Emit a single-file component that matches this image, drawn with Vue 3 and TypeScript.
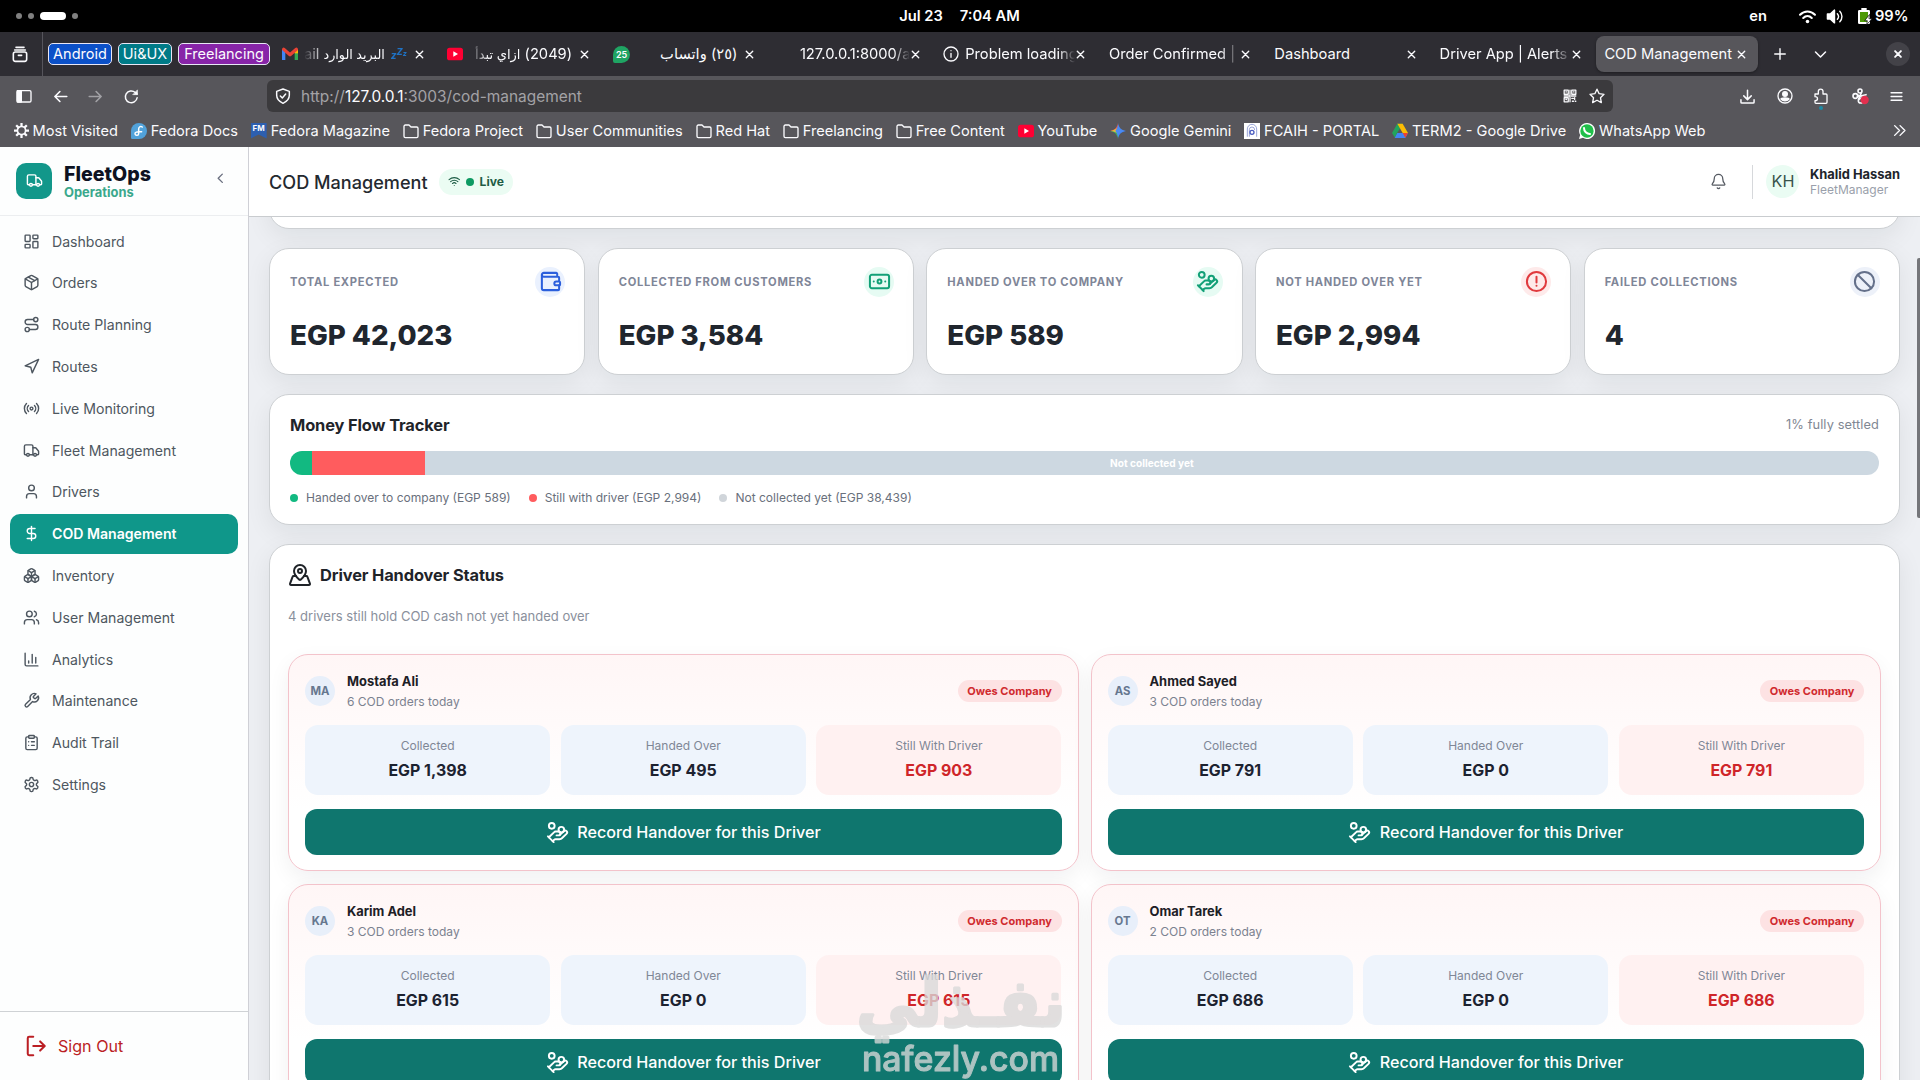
<script setup lang="ts">
import { h, type FunctionalComponent } from 'vue'

const glyphs: Record<string, string> = {
  dashboard: '<rect x="3" y="3" width="7" height="9" rx="1"/><rect x="14" y="3" width="7" height="5" rx="1"/><rect x="14" y="12" width="7" height="9" rx="1"/><rect x="3" y="16" width="7" height="5" rx="1"/>',
  package: '<path d="M11 21.73a2 2 0 0 0 2 0l7-4A2 2 0 0 0 21 16V8a2 2 0 0 0-1-1.73l-7-4a2 2 0 0 0-2 0l-7 4A2 2 0 0 0 3 8v8a2 2 0 0 0 1 1.73z"/><path d="M12 22V12"/><path d="M3.29 7 12 12l8.71-5"/><path d="m7.5 4.27 9 5.15"/>',
  route: '<circle cx="6" cy="19" r="3"/><path d="M9 19h8.5a3.5 3.5 0 0 0 0-7h-11a3.5 3.5 0 0 1 0-7H15"/><circle cx="18" cy="5" r="3"/>',
  navigation: '<path d="M3 11 22 2l-9 19-2-8z"/>',
  radio: '<path d="M4.9 19.1C1 15.2 1 8.8 4.9 4.9"/><path d="M7.8 16.2c-2.3-2.3-2.3-6.1 0-8.5"/><circle cx="12" cy="12" r="2"/><path d="M16.2 7.8c2.3 2.3 2.3 6.1 0 8.5"/><path d="M19.1 4.9C23 8.8 23 15.1 19.1 19"/>',
  truck: '<path d="M14 18V6a2 2 0 0 0-2-2H4a2 2 0 0 0-2 2v11a1 1 0 0 0 1 1h2"/><path d="M15 18H9"/><path d="M19 18h2a1 1 0 0 0 1-1v-3.65a1 1 0 0 0-.22-.624l-3.48-4.35A1 1 0 0 0 17.52 8H14"/><circle cx="17" cy="18" r="2"/><circle cx="7" cy="18" r="2"/>',
  user: '<path d="M19 21v-2a4 4 0 0 0-4-4H9a4 4 0 0 0-4 4v2"/><circle cx="12" cy="7" r="4"/>',
  dollar: '<path d="M12 2v20"/><path d="M17 5H9.5a3.5 3.5 0 0 0 0 7h5a3.5 3.5 0 0 1 0 7H6"/>',
  boxes: '<path d="M2.97 12.92A2 2 0 0 0 2 14.63v3.24a2 2 0 0 0 .97 1.71l3 1.8a2 2 0 0 0 2.06 0L12 19v-5.5l-5-3-4.03 2.42Z"/><path d="m7 16.5-4.74-2.85"/><path d="m7 16.5 5-3"/><path d="M7 16.5v5.17"/><path d="M12 13.5V19l3.97 2.38a2 2 0 0 0 2.06 0l3-1.8a2 2 0 0 0 .97-1.71v-3.24a2 2 0 0 0-.97-1.71L17 10.5l-5 3Z"/><path d="m17 16.5-5-3"/><path d="m17 16.5 4.74-2.85"/><path d="M17 16.5v5.17"/><path d="M7.97 4.42A2 2 0 0 0 7 6.13v4.37l5 3 5-3V6.13a2 2 0 0 0-.97-1.71l-3-1.8a2 2 0 0 0-2.06 0l-3 1.8Z"/><path d="M12 8 7.26 5.15"/><path d="m12 8 4.74-2.85"/><path d="M12 13.5V8"/>',
  users: '<path d="M16 21v-2a4 4 0 0 0-4-4H6a4 4 0 0 0-4 4v2"/><circle cx="9" cy="7" r="4"/><path d="M22 21v-2a4 4 0 0 0-3-3.87"/><path d="M16 3.13a4 4 0 0 1 0 7.75"/>',
  chart: '<path d="M3 3v16a2 2 0 0 0 2 2h16"/><path d="M18 17V9"/><path d="M13 17V5"/><path d="M8 17v-3"/>',
  wrench: '<path d="M14.7 6.3a1 1 0 0 0 0 1.4l1.6 1.6a1 1 0 0 0 1.4 0l3.77-3.77a6 6 0 0 1-7.94 7.94l-6.91 6.91a2.12 2.12 0 0 1-3-3l6.91-6.91a6 6 0 0 1 7.94-7.94l-3.76 3.76z"/>',
  clipboard: '<rect x="8" y="2" width="8" height="4" rx="1"/><path d="M16 4h2a2 2 0 0 1 2 2v14a2 2 0 0 1-2 2H6a2 2 0 0 1-2-2V6a2 2 0 0 1 2-2h2"/><path d="M12 11h4"/><path d="M12 16h4"/><path d="M8 11h.01"/><path d="M8 16h.01"/>',
  settings: '<path d="M12.22 2h-.44a2 2 0 0 0-2 2v.18a2 2 0 0 1-1 1.73l-.43.25a2 2 0 0 1-2 0l-.15-.08a2 2 0 0 0-2.73.73l-.22.38a2 2 0 0 0 .73 2.73l.15.1a2 2 0 0 1 1 1.72v.51a2 2 0 0 1-1 1.74l-.15.09a2 2 0 0 0-.73 2.73l.22.38a2 2 0 0 0 2.73.73l.15-.08a2 2 0 0 1 2 0l.43.25a2 2 0 0 1 1 1.73V20a2 2 0 0 0 2 2h.44a2 2 0 0 0 2-2v-.18a2 2 0 0 1 1-1.73l.43-.25a2 2 0 0 1 2 0l.15.08a2 2 0 0 0 2.73-.73l.22-.39a2 2 0 0 0-.73-2.73l-.15-.08a2 2 0 0 1-1-1.74v-.5a2 2 0 0 1 1-1.74l.15-.09a2 2 0 0 0 .73-2.73l-.22-.38a2 2 0 0 0-2.73-.73l-.15.08a2 2 0 0 1-2 0l-.43-.25a2 2 0 0 1-1-1.73V4a2 2 0 0 0-2-2z"/><circle cx="12" cy="12" r="3"/>',
  logout: '<path d="M9 22H4.500a1.500 1.500 0 0 1-1.500-1.500v-17A1.500 1.500 0 0 1 4.500 2H9"/><path d="m16.500 17 5-5-5-5"/><path d="M21 12H9"/>',
  wallet: '<path d="M19 7V4a1 1 0 0 0-1-1H5a2 2 0 0 0 0 4h15a1 1 0 0 1 1 1v4h-3a2 2 0 0 0 0 4h3a1 1 0 0 0 1-1v-2a1 1 0 0 0-1-1"/><path d="M3 5v14a2 2 0 0 0 2 2h15a1 1 0 0 0 1-1v-4"/>',
  banknote: '<rect x="2" y="5" width="20" height="14" rx="2"/><circle cx="12" cy="12" r="2"/><path d="M6 12h.01M18 12h.01"/>',
  handcoins: '<path d="M11 15h2a2 2 0 1 0 0-4h-3c-.6 0-1.1.2-1.4.6L3 17"/><path d="m7 21 1.6-1.4c.3-.4.8-.6 1.4-.6h4c1.1 0 2.1-.4 2.8-1.2l4.6-4.4a2 2 0 0 0-2.75-2.91l-4.2 3.9"/><path d="m2 16 6 6"/><circle cx="16" cy="9" r="2.9"/><circle cx="6" cy="5" r="3"/>',
  alert: '<circle cx="12" cy="12" r="10"/><path d="M12 7v6"/><path d="M12 16.500h.01"/>',
  ban: '<circle cx="12" cy="12" r="10"/><path d="m4.900 4.900 14.200 14.200"/>',
  mappin: '<path d="M18 8c0 3.613-3.869 7.429-5.393 8.795a1 1 0 0 1-1.214 0C9.870 15.429 6 11.613 6 8a6 6 0 0 1 12 0"/><circle cx="12" cy="8" r="2"/><path d="M8 13H5.600a1 1 0 0 0-.948.683l-2.600 7A1 1 0 0 0 3 22h18a1 1 0 0 0 .948-1.316l-2.600-7A1 1 0 0 0 18.400 13H16"/>',
  bell: '<path d="M10.268 21a2 2 0 0 0 3.464 0"/><path d="M3.262 15.326A1 1 0 0 0 4 17h16a1 1 0 0 0 .740-1.673C19.410 13.956 18 12.499 18 8A6 6 0 0 0 6 8c0 4.499-1.411 5.956-2.738 7.326"/>',
  wifi: '<path d="M12 20h.01"/><path d="M2 8.820a15 15 0 0 1 20 0"/><path d="M5 12.859a10 10 0 0 1 14 0"/><path d="M8.500 16.429a5 5 0 0 1 7 0"/>',
  left: '<path d="m15 18-6-6 6-6"/>',
  down: '<path d="m4 8 8 8 8-8"/>',
  close: '<path d="M5 5l14 14M19 5 5 19"/>',
  plus: '<path d="M12 3v18M3 12h18"/>',
  archive: '<path d="M6 2h12"/><path d="M4 6h16"/><rect x="2" y="9" width="20" height="14" rx="3"/><path d="M9.500 14h5"/>',
  panel: '<rect x="1.500" y="4" width="21" height="17" rx="2"/><path d="M2 4h6v17H2z" fill="currentColor"/>',
  back: '<path d="M22 12H3M11 4l-8 8 8 8"/>',
  forward: '<path d="M2 12h19M13 4l8 8-8 8"/>',
  reload: '<path d="M21 14a9.500 9.500 0 1 1-3-8.500L21 8"/><path d="M21.500 2v7h-7z" fill="currentColor" stroke-width="1"/>',
  shield: '<path d="M12 1.500 21.500 5v6c0 6-4 9.500-9.500 12-5.500-2.500-9.500-6-9.500-12V5z"/><path d="m8 12 3 3 5-6"/>',
  star: '<path d="m12 1.800 3.200 6.700 7.300 1-5.300 5.100 1.300 7.300-6.500-3.500-6.500 3.500 1.300-7.300L1.500 9.500l7.300-1z"/>',
  download: '<path d="M12 2v14M6 11l6 6 6-6M1.500 17v4a1.500 1.500 0 0 0 1.500 1.500h18a1.500 1.500 0 0 0 1.500-1.500v-4"/>',
  account: '<circle cx="12" cy="12" r="10.500"/><circle cx="12" cy="9" r="3.500" fill="currentColor"/><path d="M6 16.500c0-2 12-2 12 0-3 3.500-9 3.500-12 0z" fill="currentColor"/>',
  puzzle: '<path d="M3 9h5V5c0-4.500 7-4.500 7 0v4h4.500A1.500 1.500 0 0 1 21 10.500v11a1.500 1.500 0 0 1-1.500 1.500h-15A1.500 1.500 0 0 1 3 21.500V19c5 0 5-6 0-6z"/>',
  clip: '<circle cx="12" cy="4.500" r="3"/><circle cx="5" cy="12" r="3.500"/><circle cx="13" cy="19" r="3.500"/><path d="m14 7-4 10M8 13l13-3M9 11l9 4"/><circle cx="19" cy="18" r="5" fill="#e3304f" stroke="#e3304f"/>',
  menu: '<path d="M2 5h20M2 12h20M2 19h20"/>',
  more: '<path d="m3 3 9 9-9 9M13 3l9 9-9 9"/>',
  info: '<circle cx="12" cy="12" r="10.500"/><path d="M12 11v6M12 7h.01"/>',
  folder: '<path d="M1.500 20V5a2 2 0 0 1 2-2h5.500l3 3h8.500a2 2 0 0 1 2 2v12a2 2 0 0 1-2 2h-17a2 2 0 0 1-2-2z"/>',
  gear: '<circle cx="12" cy="12" r="6.500" stroke-width="2.600"/><path stroke-width="3.600" stroke-linecap="butt" d="M12 0v5M12 19v5M0 12h5M19 12h5M3.500 3.500l3.500 3.500M17 17l3.500 3.500M20.500 3.500l-3.500 3.500M7 17l-3.500 3.500"/>',
  qr: '<path d="M2 2h7v7H2zM15 2h7v7h-7zM2 15h7v7H2zM5 5h1M18 5h1M5 18h1M12 2v8M2 12h10M14 12h8M12 14v8M15 16h3M20 15v3M16 21h2M21 21h1"/>',
  youtube: '<rect x="0" y="2.500" width="24" height="19" rx="4" fill="#ff0033" stroke="none"/><path d="M9.500 8v8l7-4z" fill="#fff" stroke="none"/>',
  gmail: '<path d="M2.500 21V5" stroke="#4285f4" stroke-width="5" stroke-linecap="butt"/><path d="M21.500 21V5" stroke="#34a853" stroke-width="5" stroke-linecap="butt"/><path d="M21.500 11V5" stroke="#fbbc04" stroke-width="5" stroke-linecap="butt"/><path d="m2.500 5 9.500 8 9.500-8" stroke="#ea4335" stroke-width="5"/>',
  fedora: '<path d="M12 0a12 12 0 1 1 0 24H2a2 2 0 0 1-2-2V12A12 12 0 0 1 12 0z" fill="#51a2da" stroke="none"/><path d="M17 6c-3-2-5.500 0-5.500 3v7c0 3-5 3.500-5.500.500s4-3.500 5.500-3.500h4.500" stroke="#fff" stroke-width="2.200"/>',
  gemini: '<path d="M12 0c1.200 7 4.800 10.800 12 12H12z" fill="#4a8af4" stroke="none"/><path d="M12 0c-1.200 7-4.800 10.800-12 12h12z" fill="#e8584f" stroke="none"/><path d="M0 12c7.200 1.200 10.800 5 12 12V12z" fill="#3fae5f" stroke="none"/><path d="M12 24c1.200-7 4.800-10.800 12-12H12z" fill="#4285f4" stroke="none"/><path d="M1 12c4-.8 7-2.500 9-5v8c-2-1.500-5-2.500-9-3z" fill="#e8b83a" stroke="none"/><path d="M12 3c1 5 4 8 9 9-5 1-8 4-9 9-1-4-2-7-4-9 2-2 3-5 4-9z" fill="#4a8af4" stroke="none"/>',
  portal: '<rect width="24" height="24" fill="#fff" stroke="none"/><path d="M5 20V9a7 7 0 0 1 14 0v11M8 20V10a4 4 0 0 1 8 0" stroke="#9aa5d8" stroke-width="1.500"/><circle cx="12" cy="14" r="3" stroke="#4a5cc0"/>',
  drive: '<path d="M8 1h8L8.500 14 4.500 22 0 15z" fill="#22a45d" stroke="none"/><path d="M8 1h8l8 14h-8z" fill="#fbbc04" stroke="none"/><path d="M8 15h16l-4 7.500H4z" fill="#4285f4" stroke="none"/><path d="M16 15h8l-4 7z" fill="#ea4335" stroke="none"/>',
  whatsapp: '<path d="M12 0a12 12 0 1 1-6 22.300L0 24l1.700-6A12 12 0 0 1 12 0z" fill="#fff" stroke="none"/><circle cx="12" cy="12" r="10" fill="#1fbf4a" stroke="none"/><path d="M7.500 7.500c0 5 4 9 9 9" stroke="#fff" stroke-width="3"/>',
  volume: '<path d="M2 8.500h4L12 3v18l-6-5.500H2z" fill="currentColor"/><path d="M16 8c2 2.300 2 5.700 0 8M19.500 4.500c4 4.300 4 10.700 0 15"/>',
  syswifi: '<path d="M1.500 9.500c6-6 15-6 21 0" stroke-width="3"/><path d="M6 14c3.500-3.300 8.500-3.300 12 0" stroke-width="3"/><circle cx="12" cy="19" r="2.500" fill="currentColor" stroke="none"/>',
  battery: '<path d="M8 0h8v3h3a2 2 0 0 1 2 2v17a2 2 0 0 1-2 2H5a2 2 0 0 1-2-2V5a2 2 0 0 1 2-2h3z" fill="#fff" stroke="none"/><rect x="6" y="6" width="12" height="15" fill="#4e9a06" stroke="none"/><path d="m20 10-7 9h4l-1 6 8-9h-4z" fill="#fff" stroke="#000" stroke-width="1"/>',
}

interface IconProps { name: string; size?: number; stroke?: number }
const Icon: FunctionalComponent<IconProps> = (p) =>
  h('svg', {
    width: p.size ?? 16,
    height: p.size ?? 16,
    viewBox: '0 0 24 24',
    fill: 'none',
    stroke: 'currentColor',
    'stroke-width': p.stroke ?? 2,
    'stroke-linecap': 'round',
    'stroke-linejoin': 'round',
    style: 'display:block;flex:none;overflow:visible',
    innerHTML: glyphs[p.name],
  })
Icon.props = ['name', 'size', 'stroke']

interface Tab { title: string; lead?: string; tail?: string; icon?: string; rtl?: boolean; active?: boolean; fade?: boolean; kind?: string }
const tabs: Tab[] = [
  { title: 'البريد الوارد', tail: ' ail', icon: 'gmail', rtl: true, fade: true, kind: 'mail' },
  { lead: '(2049) ', title: 'ازاي تبدأ', icon: 'youtube', rtl: true, fade: true, kind: 'video' },
  { title: '(٢٥) واتساب', rtl: true, kind: 'chat' },
  { title: '127.0.0.1:8000/a', fade: true, kind: 'blank' },
  { title: 'Problem loading', icon: 'info', fade: true },
  { title: 'Order Confirmed |', fade: true },
  { title: 'Dashboard' },
  { title: 'Driver App | Alerts', fade: true },
  { title: 'COD Management', active: true },
]

const bookmarks = [
  ['gear', 'Most Visited'], ['fedora', 'Fedora Docs'], ['fm', 'Fedora Magazine'], ['folder', 'Fedora Project'],
  ['folder', 'User Communities'], ['folder', 'Red Hat'], ['folder', 'Freelancing'], ['folder', 'Free Content'],
  ['youtube', 'YouTube'], ['gemini', 'Google Gemini'], ['portal', 'FCAIH - PORTAL'],
  ['drive', 'TERM2 - Google Drive'], ['whatsapp', 'WhatsApp Web'],
]

const nav = [
  ['dashboard', 'Dashboard'], ['package', 'Orders'], ['route', 'Route Planning'], ['navigation', 'Routes'],
  ['radio', 'Live Monitoring'], ['truck', 'Fleet Management'], ['user', 'Drivers'], ['dollar', 'COD Management'],
  ['boxes', 'Inventory'], ['users', 'User Management'], ['chart', 'Analytics'], ['wrench', 'Maintenance'],
  ['clipboard', 'Audit Trail'], ['settings', 'Settings'],
]

const stats = [
  { label: 'Total Expected', value: 'EGP 42,023', icon: 'wallet', tone: 'blue' },
  { label: 'Collected from customers', value: 'EGP 3,584', icon: 'banknote', tone: 'green' },
  { label: 'Handed over to company', value: 'EGP 589', icon: 'handcoins', tone: 'green' },
  { label: 'Not handed over yet', value: 'EGP 2,994', icon: 'alert', tone: 'red' },
  { label: 'Failed collections', value: '4', icon: 'ban', tone: 'slate' },
]

const legend = [
  { tone: 'settled', text: 'Handed over to company (EGP 589)' },
  { tone: 'held', text: 'Still with driver (EGP 2,994)' },
  { tone: 'open', text: 'Not collected yet (EGP 38,439)' },
]

const drivers = [
  { initials: 'MA', name: 'Mostafa Ali', orders: 6, collected: '1,398', handed: '495', held: '903' },
  { initials: 'AS', name: 'Ahmed Sayed', orders: 3, collected: '791', handed: '0', held: '791' },
  { initials: 'KA', name: 'Karim Adel', orders: 3, collected: '615', handed: '0', held: '615' },
  { initials: 'OT', name: 'Omar Tarek', orders: 2, collected: '686', handed: '0', held: '686' },
]
</script>

<template>
  <div class="screen">
    <div class="sysbar">
      <div class="spaces"><i /><i /><b /><i /></div>
      <div class="clock"><span>Jul 23</span><span>7:04 AM</span></div>
      <div class="tray">
        <span class="lang">en</span>
        <Icon name="syswifi" :size="17" /><Icon name="volume" :size="17" class="vol" />
        <Icon name="battery" :size="16" /><span class="pct">99%</span>
      </div>
    </div>

    <div class="tabbar">
      <div class="archive"><Icon name="archive" :size="16" :stroke="2.4" /></div>
      <div class="groups">
        <span class="group android">Android</span>
        <span class="group uiux">Ui&amp;UX</span>
        <span class="group free">Freelancing</span>
      </div>
      <div v-for="t in tabs" :key="t.title" class="tab" :class="{ active: t.active }">
        <Icon v-if="t.icon" :name="t.icon" :size="16" class="fav" />
        <span v-else-if="t.kind === 'chat'" class="fav chat">25</span>
        <span v-else-if="t.kind === 'blank'" class="fav blank" />
        <span class="title" :class="[{ fade: t.fade, rtl: t.rtl }, t.kind]" :dir="t.rtl ? 'rtl' : 'ltr'"><em v-if="t.kind === 'mail'" class="zzz" dir="ltr">z<sup>Z</sup><sub>z</sub></em>{{ t.lead }}<span class="words">{{ t.title }}</span>{{ t.tail }}</span>
        <Icon name="close" :size="11" :stroke="3" />
      </div>
      <div class="tabtools">
        <Icon name="plus" :size="14" :stroke="2.4" />
        <Icon name="down" :size="15" :stroke="2.4" />
        <span class="winclose"><Icon name="close" :size="10" :stroke="4.5" /></span>
      </div>
    </div>

    <div class="toolbar">
      <div class="navbtns">
        <Icon name="panel" :size="16" /><Icon name="back" :size="15" :stroke="2.6" />
        <Icon name="forward" :size="15" :stroke="2.6" class="dim" /><Icon name="reload" :size="15" :stroke="2.4" />
      </div>
      <div class="urlbar">
        <Icon name="shield" :size="16" :stroke="2.2" />
        <span class="url">http://<b>127.0.0.1</b>:3003/cod-management</span>
        <Icon name="qr" :size="14" :stroke="2.2" /><Icon name="star" :size="16" />
      </div>
      <div class="exts">
        <Icon name="download" :size="15" :stroke="2.4" /><Icon name="account" :size="16" />
        <span class="ext"><Icon name="puzzle" :size="16" /><i /></span>
        <Icon name="clip" :size="16" :stroke="2.4" /><Icon name="menu" :size="13" :stroke="2.6" />
      </div>
    </div>

    <div class="bookmarks">
      <div v-for="b in bookmarks" :key="b[1]" class="bm">
        <span v-if="b[0] === 'fm'" class="fm">FM</span>
        <Icon v-else :name="b[0]" :size="b[0] === 'gear' ? 15 : 16" />
        <span>{{ b[1] }}</span>
      </div>
      <Icon name="more" :size="13" :stroke="2.6" class="overflow" />
    </div>

    <div class="page">
      <aside class="sidebar">
        <div class="brand">
          <div class="logo"><Icon name="truck" :size="17" /></div>
          <div class="brandtext"><strong>FleetOps</strong><span>Operations</span></div>
          <Icon name="left" :size="16.500" class="collapse" />
        </div>
        <nav class="nav">
          <a v-for="n in nav" :key="n[1]" class="item" :class="{ on: n[0] === 'dollar' }">
            <Icon :name="n[0]" :size="17" :stroke="2" /><span>{{ n[1] }}</span>
          </a>
        </nav>
        <div class="signout"><Icon name="logout" :size="22" :stroke="2.2" /><span>Sign Out</span></div>
      </aside>

      <main class="main">
        <header class="header">
          <h1>COD Management</h1>
          <div class="live"><Icon name="wifi" :size="12.500" /><i /><span>Live</span></div>
          <div class="account">
            <Icon name="bell" :size="17" :stroke="1.800" class="bell" />
            <span class="sep" />
            <span class="kh">KH</span>
            <div class="who"><strong>Khalid Hassan</strong><span>FleetManager</span></div>
          </div>
        </header>

        <div class="content">
          <section class="card stub" />
          <div class="stats">
            <section v-for="s in stats" :key="s.label" class="card stat">
              <div class="stathead">
                <span>{{ s.label }}</span>
                <div class="staticon" :class="s.tone"><Icon :name="s.icon" :size="23" :stroke="2.1" /></div>
              </div>
              <strong>{{ s.value }}</strong>
            </section>
          </div>

          <section class="card flow">
            <div class="flowhead"><h2>Money Flow Tracker</h2><span>1% fully settled</span></div>
            <div class="bar">
              <div class="settled" style="width: 1.380%" />
              <div class="held" style="width: 7.100%" />
              <div class="open">Not collected yet</div>
            </div>
            <div class="legend">
              <span v-for="l in legend" :key="l.tone"><i :class="l.tone" />{{ l.text }}</span>
            </div>
          </section>

          <section class="card handover">
            <div class="hohead"><Icon name="mappin" :size="24" :stroke="2" /><h2>Driver Handover Status</h2></div>
            <p>4 drivers still hold COD cash not yet handed over</p>
            <div class="drivers">
              <article v-for="d in drivers" :key="d.initials" class="driver">
                <div class="dhead">
                  <span class="avatar">{{ d.initials }}</span>
                  <div class="dname"><strong>{{ d.name }}</strong><span>{{ d.orders }} COD orders today</span></div>
                  <span class="badge">Owes Company</span>
                </div>
                <div class="boxes">
                  <div><span>Collected</span><strong>EGP {{ d.collected }}</strong></div>
                  <div><span>Handed Over</span><strong>EGP {{ d.handed }}</strong></div>
                  <div class="owed"><span>Still With Driver</span><strong>EGP {{ d.held }}</strong></div>
                </div>
                <button><Icon name="handcoins" :size="23" :stroke="2" />Record Handover for this Driver</button>
              </article>
            </div>
          </section>
        </div>
        <span class="scrollthumb" />
      </main>
    </div>

    <svg class="watermark" width="220" height="110" viewBox="0 0 220 110">
      <text x="107" y="54" text-anchor="middle" textLength="209" lengthAdjust="spacingAndGlyphs" class="wm-ar">نفـذلي</text>
      <text x="8" y="99" textLength="197" lengthAdjust="spacingAndGlyphs" class="wm-en">nafezly.com</text>
    </svg>
  </div>
</template>

<style>
html, body { margin: 0; overflow: hidden; background: #edeff3; }
</style>

<style scoped>
* { box-sizing: border-box; }
.screen { position: relative; width: 1920px; height: 1080px; overflow: hidden; display: flex; flex-direction: column; font-family: Inter, "DejaVu Sans", sans-serif; color: #1f2328; white-space: nowrap; }
h1, h2, p { margin: 0; }

.sysbar { height: 32px; flex: none; background: #000; color: #fff; display: grid; grid-template-columns: 1fr auto 1fr; align-items: center; padding: 0 11.500px 0 15.500px; font-size: 14.700px; font-weight: 600; }
.spaces { display: flex; align-items: center; gap: 6.300px; }
.spaces i { width: 6px; height: 6px; border-radius: 50%; background: #808080; }
.spaces b { width: 26px; height: 8px; border-radius: 4px; background: #fff; }
.clock { display: flex; gap: 17px; margin-right: 5px; }
.tray { display: flex; align-items: center; justify-content: flex-end; }
.lang { margin-right: 32px; }
.vol { margin: 0 13px 0 10px; }
.pct { margin-left: 3px; }

.tabbar { height: 44px; flex: none; background: #2e2d33; color: #fbfbfe; display: flex; align-items: center; font-size: 14.700px; }
.archive { width: 43px; height: 44px; border-right: 1px solid #56555c; display: flex; align-items: center; padding-left: 12px; }
.groups { display: flex; gap: 6px; width: 227px; padding-left: 5px; }
.group { height: 22px; line-height: 19px; border: 1px solid #e8e6f5; border-radius: 5px; text-align: center; margin-top: -1px; font-size: 14.500px; }
.android { background: #0b50c8; width: 64px; }
.uiux { background: #007a87; width: 54px; }
.free { background: #8724a8; width: 92px; }
.tab { width: 165.300px; height: 36px; flex: none; display: flex; align-items: center; padding: 0 10.500px 0 12.500px; }
.tab.active { width: 162px; margin-left: 3.500px; padding: 0 10.500px 0 8.500px; background: #57565b; border-radius: 8px; box-shadow: 0 1px 3px rgba(0,0,0,.35); }
.fav { margin: 0 6.500px 0 -1px; }
.fav.chat { width: 17px; height: 17px; border-radius: 9px 9px 9px 2px; background: #1fa463; font-size: 9px; font-weight: 600; line-height: 17px; text-align: center; margin: 0 10px 0 0; }
.fav.blank { width: 16px; }
.title { flex: 1; min-width: 0; overflow: hidden; line-height: 22px; }
.title.fade { -webkit-mask-image: linear-gradient(90deg, #000 85%, transparent); mask-image: linear-gradient(90deg, #000 85%, transparent); }
.title.rtl { padding-right: 7px; }
.title.rtl.fade { padding-right: 7px; -webkit-mask-image: linear-gradient(270deg, #000 82%, transparent); mask-image: linear-gradient(270deg, #000 82%, transparent); }
.title.video .words { font-size: 13px; }
.title.mail .words { font-size: 12.700px; }
.zzz { color: #1f72c4; font-weight: 800; font-size: 10px; margin-left: 6px; }
.zzz sup { font-size: 9px; line-height: 0; }
.zzz sub { font-size: 7px; line-height: 0; vertical-align: 3px; }
.tabtools { flex: 1; display: flex; align-items: center; padding: 0 10px 0 15px; gap: 26px; }
.winclose { width: 24px; height: 24px; border-radius: 50%; background: #434248; display: flex; align-items: center; justify-content: center; margin-left: auto; }

.toolbar { height: 40px; flex: none; background: #57565b; color: #fbfbfe; display: flex; align-items: center; }
.navbtns { width: 267px; padding-left: 16px; display: flex; gap: 20.700px; align-items: center; }
.dim { opacity: .45; }
.urlbar { width: 1346px; height: 32px; border-radius: 6px; background: #3b3a3d; display: flex; align-items: center; padding: 0 8px 0 8px; gap: 12px; }
.url { flex: 1; margin-left: -2px; font-size: 15.450px; color: #a3a2a6; }
.url b { font-weight: 400; color: #fbfbfe; }
.exts { flex: 1; display: flex; align-items: center; justify-content: space-between; padding: 0 17px 0 127px; }
.ext { position: relative; left: -2px; }
.ext i { position: absolute; left: 6px; top: 18px; width: 4px; height: 4px; border-radius: 50%; background: #1c8aa5; }

.bookmarks { height: 31px; flex: none; background: #57565b; color: #fbfbfe; display: flex; align-items: center; padding: 0 14px 2px 13.500px; gap: 12.700px; font-size: 14.600px; }
.bm { display: flex; align-items: center; gap: 4px; }
.fm { width: 16px; height: 16px; background: #2d5faf; font-size: 8px; font-weight: 700; line-height: 10px; text-align: center; clip-path: polygon(0 0, 100% 0, 100% 100%, 50% 75%, 0 100%); }
.overflow { margin-left: auto; }

.page { flex: 1; min-height: 0; display: flex; background: #fff; }
.sidebar { width: 249px; flex: none; border-right: 1px solid #cfd0d6; background: #fdfefe; display: flex; flex-direction: column; }
.brand { height: 69px; flex: none; border-bottom: 1px solid #eceef0; display: flex; align-items: center; padding: 0 20px 0 16px; }
.logo { width: 36px; height: 36px; margin-top: -1px; border-radius: 10px; background: #12978a; color: #fff; display: flex; align-items: center; justify-content: center; }
.brandtext { flex: 1; margin-left: 12px; padding-top: 1px; display: flex; flex-direction: column; }
.brandtext strong { font-size: 19.600px; line-height: 21px; font-weight: 800; color: #0d1222; }
.brandtext span { font-size: 12.900px; line-height: 15px; font-weight: 700; color: #3aa88c; }
.collapse { color: #6b7080; margin-top: -5px; }
.nav { flex: 1; padding: 5.300px 10px 0; display: flex; flex-direction: column; gap: 2px; }
.item { height: 39.800px; flex: none; display: flex; align-items: center; gap: 12.500px; padding-left: 12.500px; border-radius: 10px; font-size: 14.100px; color: #4e5760; }
.item.on { background: #0f978a; color: #fff; font-weight: 600; }
.signout { height: 69px; flex: none; border-top: 1px solid #cfd2d5; display: flex; align-items: center; padding: 0 0 0 25px; gap: 11px; color: #bb1f24; font-size: 16.100px; }

.main { position: relative; flex: 1; min-width: 0; display: flex; flex-direction: column; background: #edeff3; }
.header { position: relative; z-index: 1; height: 70px; flex: none; background: #fff; border-bottom: 1px solid #c9cccf; display: flex; align-items: center; padding: 0 20px; }
.header h1 { font-size: 18.100px; font-weight: 500; color: #24292f; }
.live { margin-left: 11px; height: 26px; padding: 0 9px 0 9.500px; border-radius: 13px; background: #ebfcf3; color: #1d5c45; display: flex; align-items: center; font-size: 12.100px; font-weight: 700; }
.live i { width: 8px; height: 8px; margin: 0 6px 0 5px; border-radius: 50%; background: #0d9a62; }
.account { margin-left: auto; display: flex; align-items: center; }
.bell { color: #555a62; }
.sep { width: 1px; height: 34px; background: #d6d8db; margin: 0 13px 0 25px; }
.kh { width: 33px; height: 33px; border-radius: 50%; background: #eafcf3; color: #38524a; font-size: 16.200px; line-height: 33px; text-align: center; }
.who { margin-left: 10.500px; display: flex; flex-direction: column; }
.who strong { font-size: 12.900px; line-height: 16px; font-weight: 700; color: #20242a; }
.who span { font-size: 12px; line-height: 14px; color: #9a9fab; }

.content { flex: 1; min-height: 0; overflow: hidden; padding: 0 20px; display: flex; flex-direction: column; gap: 19px; }
.card { flex: none; background: #fff; border: 1px solid #cdd0d3; border-radius: 20px; box-shadow: 0 8px 26px rgba(20, 24, 32, .07); }
.stub { height: 60px; margin-top: -48px; }
.stats { display: grid; grid-template-columns: repeat(5, 1fr); gap: 12.300px; margin-top: -.500px; }
.stat { height: 127px; padding: 17px 20px 0; }
.stathead { height: 32px; display: flex; align-items: center; justify-content: space-between; font-size: 11.200px; font-weight: 700; letter-spacing: .700px; text-transform: uppercase; color: #7f8698; }
.staticon { width: 30px; height: 30px; border-radius: 50%; margin-right: -1px; display: flex; align-items: center; justify-content: center; }
.blue { background: #eaf1fe; color: #2b5fdc; }
.green { background: #e6fbf3; color: #12a077; }
.red { background: #feeaea; color: #e03a3e; }
.slate { background: #edf1f9; color: #64708a; }
.stat > strong { display: block; margin-top: 20.500px; font-size: 27.700px; line-height: 34px; font-weight: 800; color: #20262e; }

.flow { height: 131px; padding: 19px 20px 0; }
.flowhead { display: flex; align-items: center; justify-content: space-between; height: 22px; }
h2 { font-size: 16.400px; font-weight: 700; letter-spacing: -.120px; color: #1f2429; }
.flowhead span { font-size: 12.800px; color: #7f8793; letter-spacing: .1px; }
.bar { margin-top: 15px; height: 24px; border-radius: 12px; overflow: hidden; display: flex; }
.settled { background: #12b981; }
.held { background: #ff5c5e; }
.open { background: #cdd8e1; }
.bar .open { flex: 1; color: #fff; font-size: 10.100px; font-weight: 700; line-height: 24px; text-align: center; }
.legend { margin-top: 14px; display: flex; gap: 18px; font-size: 12.030px; line-height: 18px; color: #69707c; }
.legend span { display: flex; align-items: center; }
.legend i { width: 8px; height: 8px; border-radius: 50%; margin-right: 8px; }
.legend .open { background: #d0d5da; }

.handover { height: 640px; padding: 18.500px 18px 0 18px; }
.hohead { display: flex; align-items: center; gap: 8px; height: 24px; }
.handover p { margin-top: 18px; font-size: 13.030px; line-height: 22px; color: #8a909c; }
.drivers { margin-top: 27px; display: grid; grid-template-columns: 1fr 1fr; gap: 13px 12px; }
.driver { height: 217.200px; border: 1px solid #f3c3cb; border-radius: 20px; padding: 16px; background: linear-gradient(#fff6f6, #fff 72%); box-shadow: 0 8px 22px rgba(20, 24, 32, .06); }
.dhead { height: 40px; display: flex; align-items: center; }
.avatar { width: 30px; height: 30px; border-radius: 50%; background: #e8effa; color: #66778f; font-size: 11.300px; font-weight: 700; line-height: 30px; text-align: center; }
.dname { flex: 1; margin-left: 12px; padding-top: 1px; display: flex; flex-direction: column; }
.dname strong { font-size: 12.900px; line-height: 20px; font-weight: 700; color: #1d2026; }
.dname span { font-size: 12.030px; line-height: 20px; color: #7c8290; }
.badge { height: 22px; line-height: 22px; padding: 0 9.500px; border-radius: 11px; background: #fde2e3; color: #d02a2e; font-size: 11px; font-weight: 700; }
.boxes { margin-top: 14px; display: grid; grid-template-columns: repeat(3, 1fr); gap: 10.300px; }
.boxes > div { height: 70px; border-radius: 13px; background: #eef4fc; display: flex; flex-direction: column; align-items: center; padding-top: 12px; }
.boxes span { font-size: 12.030px; line-height: 18px; color: #7f8796; }
.boxes strong { margin-top: 4px; font-size: 15.900px; line-height: 24px; font-weight: 700; color: #1c2230; }
.boxes .owed { background: #fff1f1; }
.boxes .owed strong { color: #cf2529; }
.driver button { width: 100%; height: 46px; margin-top: 14px; border: 0; border-radius: 12px; background: #0f766e; color: #fff; font-family: inherit; font-size: 16.150px; font-weight: 500; display: flex; align-items: center; justify-content: center; gap: 8.500px; padding: 0; }

.scrollthumb { position: absolute; right: 0; top: 111px; width: 3px; height: 260px; background: #75767a; border-radius: 2px 0 0 2px; }
.watermark { position: absolute; left: 854px; top: 972px; fill: #d9d9d9; stroke: #d9d9d9; stroke-linejoin: round; opacity: .78; }
.wm-ar { font-family: "DejaVu Sans", sans-serif; font-weight: 700; font-size: 66px; stroke-width: 3px; }
.wm-en { font-family: Inter, sans-serif; font-weight: 500; font-size: 35px; stroke-width: 1px; }
</style>
